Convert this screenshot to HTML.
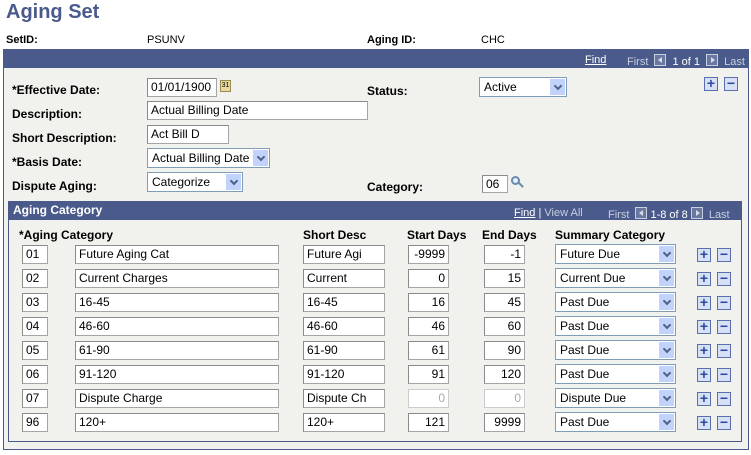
<!DOCTYPE html>
<html><head><meta charset="utf-8"><style>
*{box-sizing:border-box;margin:0;padding:0}
body{width:751px;height:455px;background:#fff;font-family:"Liberation Sans",Arial,sans-serif;font-size:12px;color:#000;position:relative;overflow:hidden}
.a{position:absolute;white-space:nowrap}
.b{font-weight:bold}
.in{position:absolute;background:#fff;border:1px solid #a5a5a5;border-top-color:#8a8a8a;border-left-color:#8a8a8a;height:19px;line-height:17px;padding:0 3px;font-size:12px;overflow:hidden;white-space:nowrap}
.r{text-align:right}
.dis{color:#aaa;border-color:#ccc}
.sel{position:absolute;background:#fff;border:1px solid #7f9db9;height:20px;line-height:18px;padding:0 4px;overflow:hidden;white-space:nowrap}
.sel:after{content:"";position:absolute;right:1px;top:1px;width:15px;height:16px;background:#c1d3fb}
.sel i{position:absolute;right:5px;top:5px;width:6px;height:6px;border-right:2px solid #4d6185;border-bottom:2px solid #4d6185;transform:rotate(45deg);z-index:2}
.bar{position:absolute;background:#4a5a8b;color:#fff}
.pm{position:absolute;width:14px;height:14px;border:1px solid #5a6fae;background:#d8e0f5;color:#2b4aa0;font-weight:bold;font-size:14px;line-height:11px;text-align:center}
.nav{position:absolute;color:#c8cfe0;font-size:11px}
.ar{display:inline-block;width:12px;height:12px;border:1px solid #c8cfe0;background:#6a78a0;vertical-align:-1px;margin:0 3px;position:relative}
.ar.l:after,.ar.rr:after{content:"";position:absolute;top:2px;border-top:3px solid transparent;border-bottom:3px solid transparent}
.ar.l:after{left:3px;border-right:4px solid #d8dce8}
.ar.rr:after{left:4px;border-left:4px solid #d8dce8}
</style></head><body>
<div class="a b" style="left:6px;top:1px;font-size:20px;color:#4a5a8c">Aging Set</div>
<div class="a b" style="left:6px;top:34px;font-size:11px">SetID:</div>
<div class="a" style="left:147px;top:34px;font-size:11px">PSUNV</div>
<div class="a b" style="left:367px;top:34px;font-size:11px">Aging ID:</div>
<div class="a" style="left:481px;top:34px;font-size:11px">CHC</div>

<div style="position:absolute;left:3px;top:49px;width:746px;height:401px;border:1px solid #4a5a8b;background:#f1f2ee"></div>
<div class="bar" style="left:3px;top:49px;width:746px;height:19px"></div>
<div class="nav" style="left:585px;top:54px;color:#fff;text-decoration:underline">Find</div>
<div class="nav" style="left:627px;top:54px">First <span class="ar l"></span><span style="color:#fff"> 1 of 1 </span><span class="ar rr"></span> Last</div>
<div class="pm" style="left:704px;top:77px">+</div><div class="pm" style="left:724px;top:77px">−</div>

<div class="a b" style="left:12px;top:83px">*Effective Date:</div>
<div class="in" style="left:147px;top:78px;width:70px">01/01/1900</div>
<div class="a" style="left:220px;top:80px;width:11px;height:12px;background:#e9d9a0;border:1px solid #9a8a50;font-size:7px;line-height:10px;text-align:center">31</div>
<div class="a b" style="left:367px;top:84px">Status:</div>
<div class="sel" style="left:479px;top:77px;width:88px">Active<i></i></div>
<div class="a b" style="left:12px;top:107px">Description:</div>
<div class="in" style="left:147px;top:101px;width:221px">Actual Billing Date</div>
<div class="a b" style="left:12px;top:131px">Short Description:</div>
<div class="in" style="left:147px;top:125px;width:82px">Act Bill D</div>
<div class="a b" style="left:12px;top:155px">*Basis Date:</div>
<div class="sel" style="left:147px;top:148px;width:123px">Actual Billing Date<i></i></div>
<div class="a b" style="left:12px;top:179px">Dispute Aging:</div>
<div class="sel" style="left:147px;top:172px;width:96px">Categorize<i></i></div>
<div class="a b" style="left:367px;top:180px">Category:</div>
<div class="in" style="left:482px;top:175px;width:26px;height:18px;line-height:16px">06</div>
<div class="a" style="left:511px;top:176px;width:9px;height:9px;border:2px solid #6a8ab0;border-radius:50%;background:#e8f0ff"></div>
<div class="a" style="left:518px;top:184px;width:6px;height:2px;background:#6a8ab0;transform:rotate(45deg)"></div>

<div style="position:absolute;left:8px;top:201px;width:734px;height:241px;border:1px solid #4a5a8b"></div>
<div class="bar b" style="left:8px;top:201px;width:734px;height:19px;padding:2px 0 0 5px">Aging Category</div>
<div class="nav" style="left:514px;top:207px;color:#fff"><span style="text-decoration:underline">Find</span> | <span style="color:#c8cfe0">View All</span></div>
<div class="nav" style="left:608px;top:207px">First <span class="ar l"></span><span style="color:#fff">1-8 of 8</span><span class="ar rr"></span> Last</div>

<div class="a b" style="left:19px;top:228px">*Aging Category</div>
<div class="a b" style="left:303px;top:228px">Short Desc</div>
<div class="a b" style="left:407px;top:228px">Start Days</div>
<div class="a b" style="left:482px;top:228px">End Days</div>
<div class="a b" style="left:555px;top:228px">Summary Category</div>

<div style="position:absolute;left:0;top:245px">
<div style="position:relative;height:24px"><div class="in" style="left:22px;width:26px">01</div><div class="in" style="left:75px;width:204px">Future Aging Cat</div><div class="in" style="left:303px;width:82px">Future Agi</div><div class="in r" style="left:408px;width:41px">-9999</div><div class="in r" style="left:484px;width:41px">-1</div><div class="sel" style="left:555px;top:-1px;width:121px">Future Due<i></i></div><div class="pm" style="left:697px;top:3px">+</div><div class="pm" style="left:717px;top:3px">−</div></div>
<div style="position:relative;height:24px"><div class="in" style="left:22px;width:26px">02</div><div class="in" style="left:75px;width:204px">Current Charges</div><div class="in" style="left:303px;width:82px">Current</div><div class="in r" style="left:408px;width:41px">0</div><div class="in r" style="left:484px;width:41px">15</div><div class="sel" style="left:555px;top:-1px;width:121px">Current Due<i></i></div><div class="pm" style="left:697px;top:3px">+</div><div class="pm" style="left:717px;top:3px">−</div></div>
<div style="position:relative;height:24px"><div class="in" style="left:22px;width:26px">03</div><div class="in" style="left:75px;width:204px">16-45</div><div class="in" style="left:303px;width:82px">16-45</div><div class="in r" style="left:408px;width:41px">16</div><div class="in r" style="left:484px;width:41px">45</div><div class="sel" style="left:555px;top:-1px;width:121px">Past Due<i></i></div><div class="pm" style="left:697px;top:3px">+</div><div class="pm" style="left:717px;top:3px">−</div></div>
<div style="position:relative;height:24px"><div class="in" style="left:22px;width:26px">04</div><div class="in" style="left:75px;width:204px">46-60</div><div class="in" style="left:303px;width:82px">46-60</div><div class="in r" style="left:408px;width:41px">46</div><div class="in r" style="left:484px;width:41px">60</div><div class="sel" style="left:555px;top:-1px;width:121px">Past Due<i></i></div><div class="pm" style="left:697px;top:3px">+</div><div class="pm" style="left:717px;top:3px">−</div></div>
<div style="position:relative;height:24px"><div class="in" style="left:22px;width:26px">05</div><div class="in" style="left:75px;width:204px">61-90</div><div class="in" style="left:303px;width:82px">61-90</div><div class="in r" style="left:408px;width:41px">61</div><div class="in r" style="left:484px;width:41px">90</div><div class="sel" style="left:555px;top:-1px;width:121px">Past Due<i></i></div><div class="pm" style="left:697px;top:3px">+</div><div class="pm" style="left:717px;top:3px">−</div></div>
<div style="position:relative;height:24px"><div class="in" style="left:22px;width:26px">06</div><div class="in" style="left:75px;width:204px">91-120</div><div class="in" style="left:303px;width:82px">91-120</div><div class="in r" style="left:408px;width:41px">91</div><div class="in r" style="left:484px;width:41px">120</div><div class="sel" style="left:555px;top:-1px;width:121px">Past Due<i></i></div><div class="pm" style="left:697px;top:3px">+</div><div class="pm" style="left:717px;top:3px">−</div></div>
<div style="position:relative;height:24px"><div class="in" style="left:22px;width:26px">07</div><div class="in" style="left:75px;width:204px">Dispute Charge</div><div class="in" style="left:303px;width:82px">Dispute Ch</div><div class="in r dis" style="left:408px;width:41px">0</div><div class="in r dis" style="left:484px;width:41px">0</div><div class="sel" style="left:555px;top:-1px;width:121px">Dispute Due<i></i></div><div class="pm" style="left:697px;top:3px">+</div><div class="pm" style="left:717px;top:3px">−</div></div>
<div style="position:relative;height:24px"><div class="in" style="left:22px;width:26px">96</div><div class="in" style="left:75px;width:204px">120+</div><div class="in" style="left:303px;width:82px">120+</div><div class="in r" style="left:408px;width:41px">121</div><div class="in r" style="left:484px;width:41px">9999</div><div class="sel" style="left:555px;top:-1px;width:121px">Past Due<i></i></div><div class="pm" style="left:697px;top:3px">+</div><div class="pm" style="left:717px;top:3px">−</div></div>
</div>
</body></html>
